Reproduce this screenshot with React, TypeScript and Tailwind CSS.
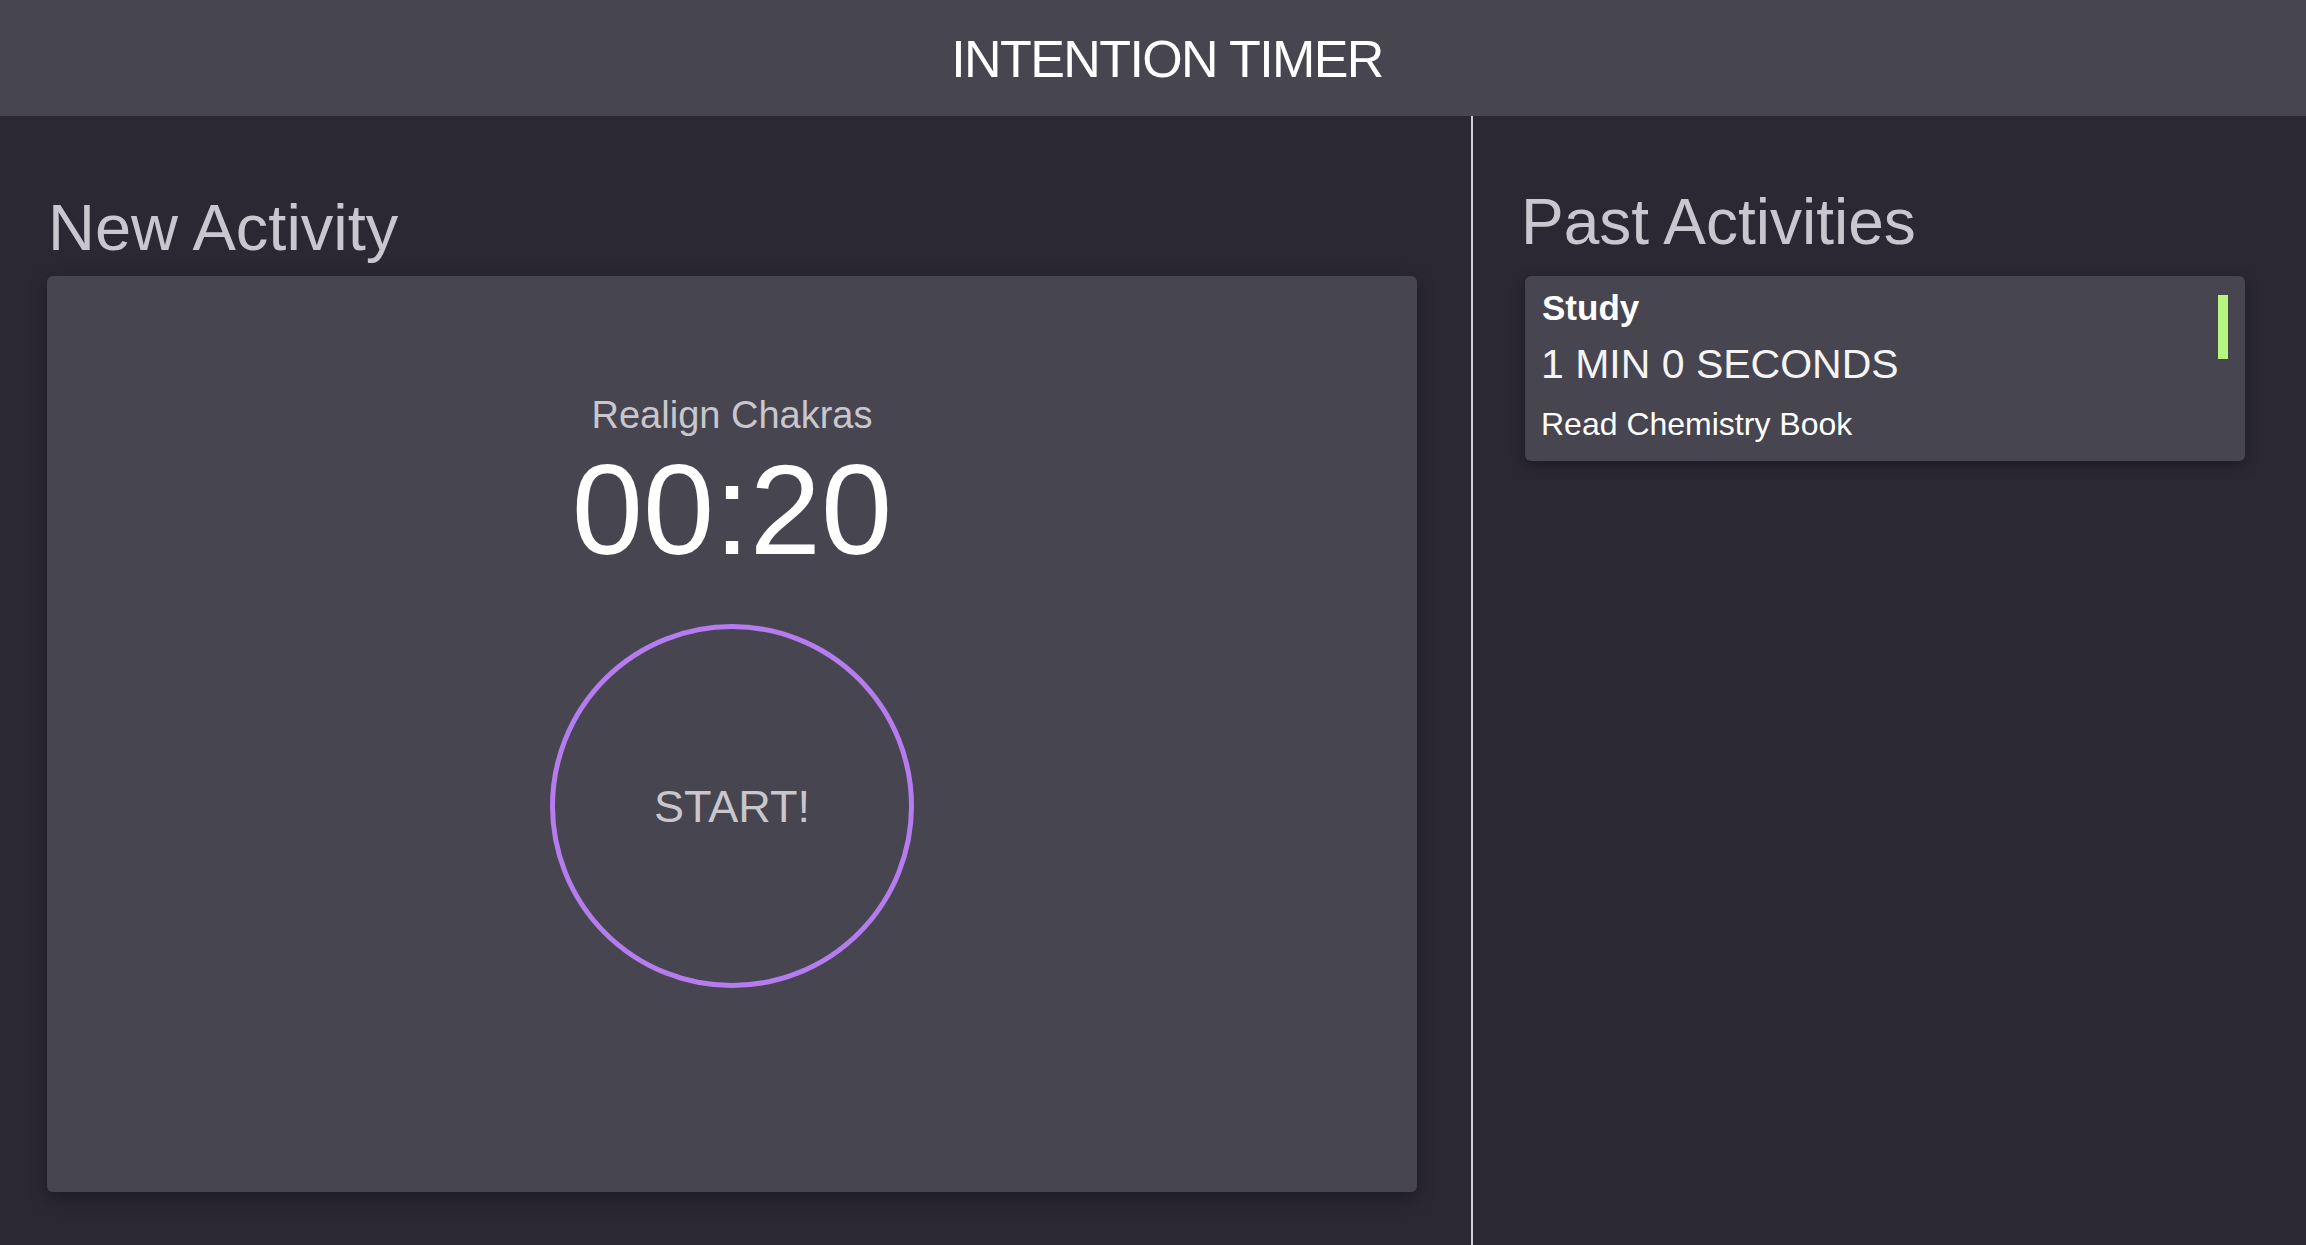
import React from "react";

const font = { fontFamily: '"Liberation Sans", Arial, sans-serif' };

const PastActivityCard = ({
  category,
  time,
  description,
}: {
  category: string;
  time: string;
  description: string;
}) => {
  return (
    <div className="flex justify-between items-start bg-[#47454f] rounded-md pl-[16px] pr-[17px] pt-[14px] pb-[21px] shadow-[0_4px_14px_rgba(0,0,0,0.35)]">
      <div className="flex flex-col text-white">
        <p className="text-[35px] leading-none font-bold pl-[1px]">{category}</p>
        <p className="text-[41px] leading-none mt-[19px] text-[#f4f4f6]">{time}</p>
        <p className="text-[32px] leading-none mt-[23px]">{description}</p>
      </div>
      {/* status bar */}
      <div className="w-[10px] h-[64px] mt-[5px] bg-[#b8f57f]"></div>
    </div>
  );
};

export default function App() {
  return (
    <div style={font} className="w-[2306px] h-[1245px] bg-[#2b2833] flex flex-col overflow-hidden">
      <header className="h-[116px] shrink-0 bg-[#47454f] flex items-center justify-center pl-[28px] pt-[2px]">
        <h1 className="text-[52px] leading-none text-white tracking-[-1.6px] font-light">
          INTENTION TIMER
        </h1>
      </header>

      <main className="flex flex-1">
        {/* New activity */}
        <section className="w-[1471px] shrink-0 pl-[47px] pr-[54px] pt-[79px]">
          <h2 className="text-[65px] leading-none text-[#c9c7ce] font-light pl-[1px]">New Activity</h2>
          <div className="mt-[16px] h-[916px] bg-[#47454f] rounded-md shadow-[0_6px_18px_rgba(0,0,0,0.35)] flex flex-col items-center pt-[120px]">
            <p className="text-[38px] leading-none text-[#c9c7ce]">Realign Chakras</p>
            <p className="text-[128px] leading-none text-white mt-[12px]">00:20</p>
            <button className="mt-[50px] w-[364px] h-[364px] rounded-full border-[5px] border-[#b57cf0] flex items-center justify-center">
              <span className="text-[45px] leading-none text-[#c9c7ce]">START!</span>
            </button>
          </div>
        </section>

        <div className="w-[2px] bg-[#cfcdd3]"></div>

        {/* Past activities */}
        <section className="flex-1 pl-[52px] pr-[61px] pt-[74px]">
          <h2 className="text-[64px] leading-none text-[#c9c7ce] font-light -ml-[4px]">Past Activities</h2>
          <div className="mt-[22px]">
            <PastActivityCard category="Study" time="1 MIN 0 SECONDS" description="Read Chemistry Book" />
          </div>
        </section>
      </main>
    </div>
  );
}
